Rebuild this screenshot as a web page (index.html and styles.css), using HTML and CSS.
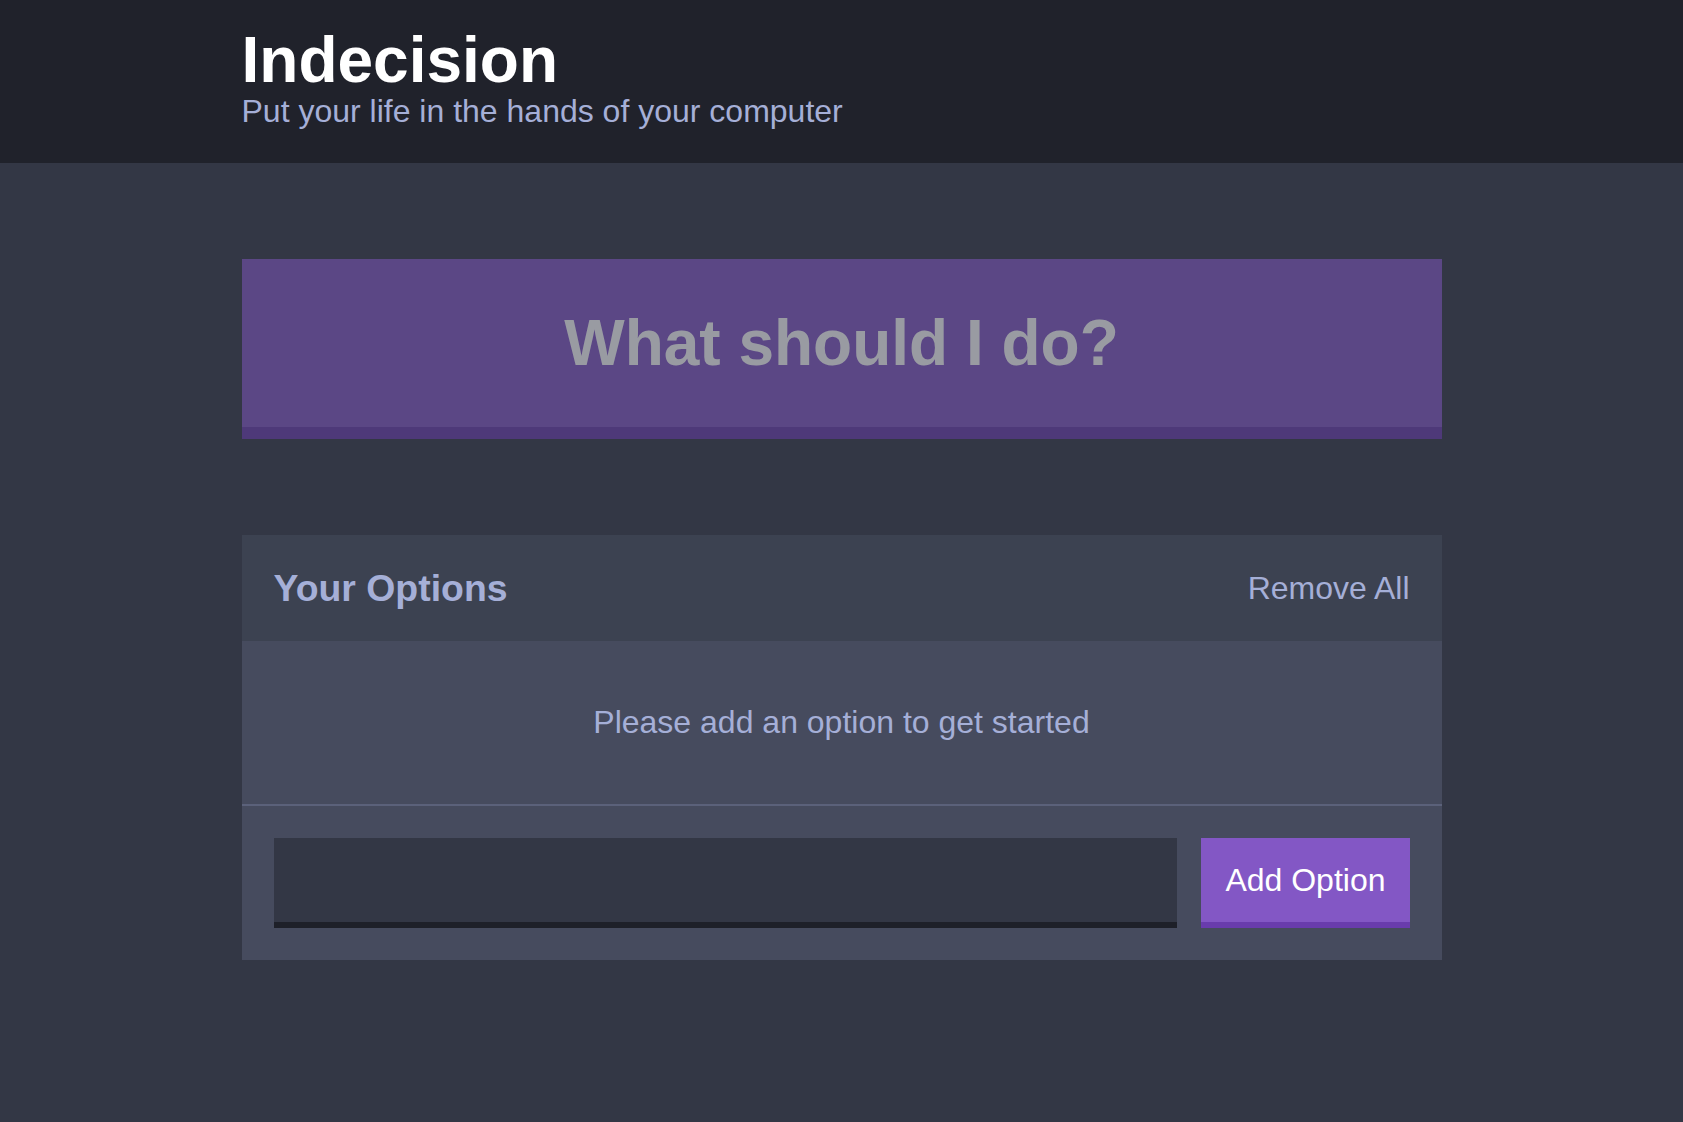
FILE: index.html
```html
<!DOCTYPE html>
<html lang="en">
<head>
<meta charset="utf-8">
<title>Indecision</title>
<link rel="stylesheet" href="styles.css">
</head>
<body>
<header class="header">
  <div class="container">
    <h1 class="header__title">Indecision</h1>
    <h2 class="header__subtitle">Put your life in the hands of your computer</h2>
  </div>
</header>
<main class="container main">
  <button class="big-button" disabled>What should I do?</button>
  <div class="widget">
    <div class="widget-header">
      <h3 class="widget-header__title">Your Options</h3>
      <button class="button button--link">Remove All</button>
    </div>
    <p class="widget__message">Please add an option to get started</p>
    <form class="add-option">
      <input class="add-option__input" type="text" name="option">
      <button class="button" type="button">Add Option</button>
    </form>
  </div>
</main>
</body>
</html>
```
FILE: styles.css
```css
* {
  box-sizing: border-box;
}

html, body {
  margin: 0;
  padding: 0;
}

body {
  background: #333745;
  font-family: "Liberation Sans", Arial, Helvetica, sans-serif;
  font-size: 32px;
  color: #a5afd7;
}

button, input {
  font-family: inherit;
}

.container {
  max-width: 1200px;
  margin: 0 auto;
}

.header {
  background: #20222b;
  padding: 32px 0 29px;
}

.header__title {
  color: #ffffff;
  font-size: 64px;
  font-weight: bold;
  line-height: 56px;
  margin: 0;
}

.header__subtitle {
  color: #a5afd7;
  font-size: 32px;
  font-weight: 500;
  line-height: 46px;
  margin: 0;
}

.main {
  padding-top: 96px;
}

.big-button {
  display: block;
  width: 100%;
  background: #8357c5;
  border: none;
  border-bottom: 12px solid #693cad;
  color: #ffffff;
  font-size: 64px;
  font-weight: bold;
  line-height: 72px;
  padding: 48px;
  margin: 0 0 96px;
  opacity: 0.5;
}

.widget {
  background: #464b5e;
}

.widget-header {
  background: #3c4251;
  display: flex;
  justify-content: space-between;
  align-items: center;
  padding: 32px;
}

.widget-header__title {
  margin: 0;
  font-size: 37.4px;
  line-height: 42px;
  font-weight: bold;
  color: #a5afd7;
}

.button {
  background: #8357c5;
  border: none;
  border-bottom: 6px solid #693cad;
  color: #ffffff;
  font-size: 32px;
  font-weight: 500;
  line-height: 36px;
  padding: 24px;
}

.button--link {
  background: none;
  border: none;
  color: #a5afd7;
  padding: 0;
  line-height: 37px;
}

.widget__message {
  margin: 0;
  padding: 64px;
  line-height: 35px;
  text-align: center;
  color: #a5afd7;
  border-bottom: 2px solid #5b617a;
}

.add-option {
  display: flex;
  padding: 32px;
}

.add-option__input {
  flex-grow: 1;
  background: #333745;
  border: none;
  border-bottom: 6px solid #1e2029;
  color: #a5afd7;
  font-size: 32px;
  line-height: 36px;
  padding: 24px;
  margin: 0 24px 0 0;
  outline: none;
}
```
